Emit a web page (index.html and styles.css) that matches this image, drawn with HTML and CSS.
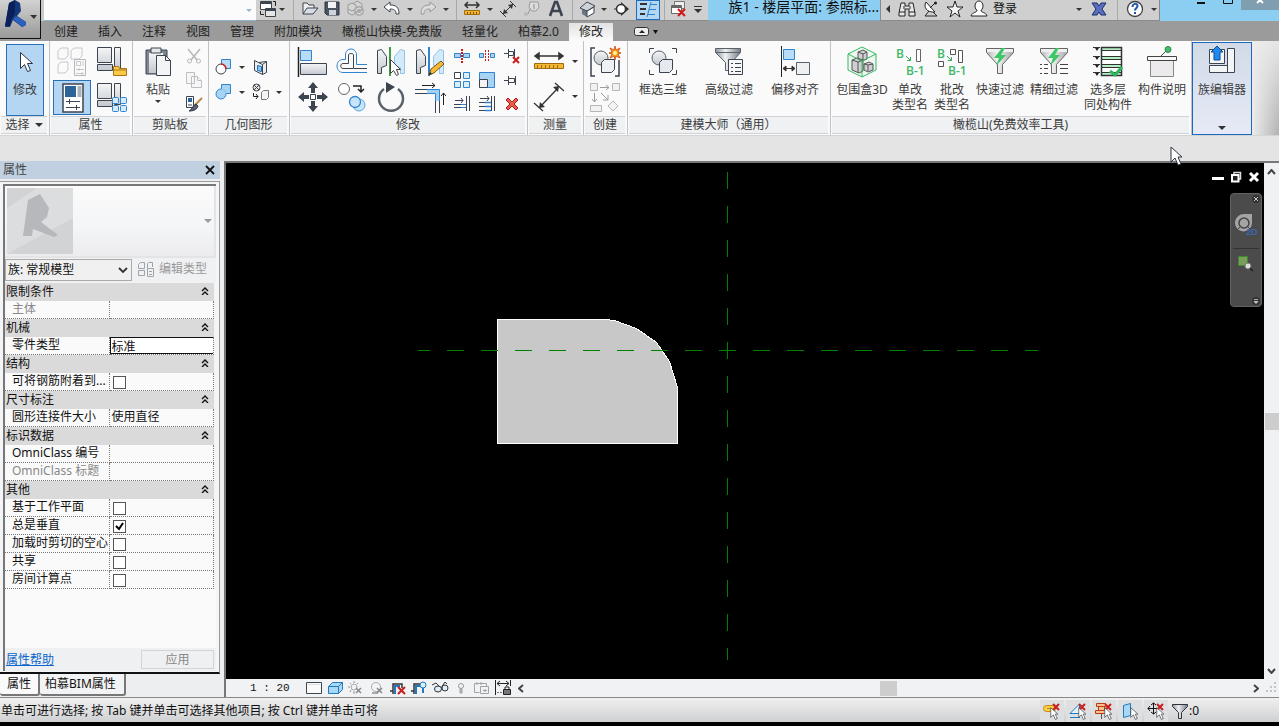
FILE: index.html
```
<!DOCTYPE html>
<html lang="zh-CN">
<head>
<meta charset="utf-8">
<title>族1 - 楼层平面</title>
<link rel="stylesheet" href="styles.css">
</head>
<body>
<svg class="defs" aria-hidden="true">
  <defs>
    <linearGradient id="steel" x1="0" y1="0" x2="0" y2="1"><stop offset="0" stop-color="#f4f5f6"/><stop offset="1" stop-color="#c4c9d0"/></linearGradient>
    <linearGradient id="metal" x1="0" y1="0" x2="1" y2="0"><stop offset="0" stop-color="#8b95a0"/><stop offset=".4" stop-color="#eef0f2"/><stop offset="1" stop-color="#737d88"/></linearGradient>
    <linearGradient id="silver" x1="0" y1="0" x2="1" y2="0"><stop offset="0" stop-color="#b4b4b8"/><stop offset=".4" stop-color="#f4f4f4"/><stop offset="1" stop-color="#a8a8ac"/></linearGradient>
    <symbol id="arrow" viewBox="0 0 12 20"><path d="M1 1v15l4-4 3 7 3-1-3-7h4z" fill="#fff" stroke="#2c3440" stroke-width="1"/></symbol>
    <symbol id="redx" viewBox="0 0 8 8"><path d="M1 1l6 6M7 1l-6 6" stroke="#c81e1e" stroke-width="2"/></symbol>
    <symbol id="collapse" viewBox="0 0 8 8"><path d="M1 4l3-3 3 3M1 8l3-3 3 3" fill="none" stroke="#111" stroke-width="1.4"/></symbol>
  </defs>
</svg>

<header class="top">
  <button class="app" aria-label="应用程序菜单">
    <svg width="40" height="38"><path d="M9 3l6-3 5 3 1 8-4 5 9 6v3l-4 2-9-7-3 7H5z" fill="#15357c"/><path d="M9 3l6-3v13l-4 7-1 6H5z" fill="#0b1f58"/><path d="M16 16l10 6v3l-4 2-9-8z" fill="#2d5fbd"/><path d="M30 15h7l-3 4z" fill="#333"/></svg>
  </button>
  <div class="topbar">
    <div class="recent"><i class="tri pale"></i></div>
    <div class="quick">
      <button class="q w22" aria-label="切换窗口"><svg width="20" height="20"><path d="M3.500 2.500h11v8h-11z" fill="#fff" stroke="#3c4450"/><path d="M3 4h12" stroke="#3c4450" stroke-width="2"/><path d="M8.500 9.500h10v8h-10z" fill="#e6e6e6" stroke="#3c4450"/><path d="M8 11h11" stroke="#3c4450" stroke-width="2"/><path d="M16 2.500h2.500V7M3.500 12v3.500H7" stroke="#222" fill="none"/></svg></button>
      <button class="q w8" aria-label="更多"><i class="tri"></i></button><i class="sep w14"></i>
      <button class="q w20" aria-label="打开"><svg width="18" height="18"><path d="M2 14V3h4l2 2h5v3" fill="#eee" stroke="#3c4450"/><path d="M2 14l4-6h11l-5 6z" fill="#d9dee4" stroke="#3c4450"/></svg></button>
      <button class="q w24" aria-label="保存"><svg width="18" height="18"><path d="M2 2h14v13H4l-2-2z" fill="#4a5564" stroke="#2c3440"/><path d="M5 2h8v6H5z" fill="#f3f3f3"/><path d="M6 10h7v5H6z" fill="#cfd4da"/></svg></button>
      <button class="q w24" aria-label="同步"><svg width="20" height="20"><path d="M2 6l4-2 4 2v4l-4 2-4-2zM7 5l4-3 5 3v6l-5 3M2 10v4l4 2 4-2" fill="#d4d4d4" stroke="#999"/><circle cx="13" cy="12" r="5" fill="#aaa"/><path d="M10 12a3 3 0 015-2M16 12a3 3 0 01-5 2" stroke="#eee" fill="none"/></svg></button>
      <button class="q w12" aria-label="更多"><i class="tri"></i></button>
      <button class="q w24" aria-label="放弃"><svg width="18" height="18"><path d="M1 7l6-5v3c6 0 9 2 9 9h-3c0-4-2-5-6-5v3z" fill="#fff" stroke="#3c4450"/></svg></button>
      <button class="q w12" aria-label="更多"><i class="tri"></i></button>
      <button class="q w24" aria-label="重做"><svg width="18" height="18"><path d="M17 7l-6-5v3c-6 0-9 2-9 9h3c0-4 2-5 6-5v3z" fill="#ddd" stroke="#999"/></svg></button>
      <button class="q w12" aria-label="更多"><i class="tri"></i></button><i class="sep w8"></i>
      <button class="q w24" aria-label="测量"><svg width="18" height="18"><path d="M2 5h13M5 2L2 5l3 3M13 2l3 3-3 3" stroke="#333" fill="none" stroke-width="1.500"/><path d="M1.500 10.500h15v4h-15z" fill="#f2b632" stroke="#a06c10"/><path d="M4.500 12v2M7.500 12v2M10.500 12v2M13.500 12v2" stroke="#805000"/></svg></button>
      <button class="q w12" aria-label="更多"><i class="tri"></i></button>
      <button class="q w24" aria-label="对齐标注"><svg width="18" height="18"><path d="M4 14L14 4M1 11l6 6M11 1l6 6" stroke="#333"/><path d="M4 14l1-5 4 4zM14 4l-1 5-4-4z" fill="#333"/></svg></button>
      <button class="q w24" aria-label="标记"><svg width="18" height="18"><path d="M1 14h4l3-7" stroke="#999" fill="none"/><path d="M7 2h8l1 5-3 4H9L6 7z" fill="#ddd" stroke="#999"/><path d="M11 4v5" stroke="#888"/><circle cx="3" cy="14" r="2" fill="#bbb"/></svg></button>
      <button class="q w24" aria-label="文字"><svg width="18" height="18"><path d="M3 16L8 2h2l5 14M5 11h8" fill="none" stroke="#3c4450" stroke-width="2.600"/></svg></button><i class="sep w8"></i>
      <button class="q w24" aria-label="三维视图"><svg width="18" height="18"><path d="M3 8l5 3v6l-5-3z" fill="#6c7682"/><path d="M8 11l7-4v6l-7 4z" fill="#fff" stroke="#3c4450"/><path d="M1 8l7-6 8 4-8 5z" fill="#cdd3da" stroke="#3c4450"/></svg></button>
      <button class="q w8" aria-label="更多"><i class="tri"></i></button>
      <button class="q w28" aria-label="剖面"><svg width="18" height="18"><path d="M8 2l8 7-8 7z" fill="#333"/><circle cx="8" cy="9" r="4.500" fill="#fff" stroke="#333" stroke-width="1.500"/><path d="M1 9h3" stroke="#333"/></svg></button>
      <button class="q w24 on" aria-label="细线"><svg width="20" height="20"><path d="M2 4h7M2 9h6M2 14h5" stroke="#333" stroke-width="2"/><path d="M13 2L9 17M12 4.500h7M11 9.500h7M10 14.500h7" stroke="#2f83cf" fill="none"/></svg></button><i class="sep w8"></i>
      <button class="q w20" aria-label="关闭隐藏窗口"><svg width="20" height="20"><path d="M6.500 2.500h10v7h-10z" fill="#eee" stroke="#777"/><path d="M3.500 6.500h10v8h-10z" fill="#fff" stroke="#666"/><path d="M3 8h11" stroke="#666" stroke-width="2"/><path d="M10 10l7 7M17 10l-7 7" stroke="#d01818" stroke-width="2"/></svg></button>
      <button class="q w20 more" aria-label="自定义"><i class="bar"></i><i class="tri wide"></i></button>
    </div>
    <h1 class="doc-title">族1 - 楼层平面: 参照标...</h1>
    <div class="info">
      <button class="q w14" aria-label="折叠"><svg width="6" height="10"><path d="M5 1v8L1 5z" fill="#333"/></svg></button>
      <button class="q w24" aria-label="搜索"><svg width="18" height="18"><path d="M3 3h4v3h4V3h4l2 10v3h-6V9H7v7H1v-3z" fill="#e8e8e8" stroke="#222"/><path d="M1 12h6M11 12h6M6 6v3M12 6v3" stroke="#222"/></svg></button>
      <button class="q w24" aria-label="通讯中心"><svg width="18" height="18"><path d="M4 2c-3 5 1 11 9 10z" fill="#fff" stroke="#222"/><path d="M8 8l5-5M7 11l-4 5h12l-4-4" fill="none" stroke="#222"/><circle cx="13.500" cy="3" r="1.500" fill="#222"/></svg></button>
      <button class="q w24" aria-label="收藏夹"><svg width="18" height="18"><path d="M9 1l2 6h6l-5 4 2 6-5-4-5 4 2-6-5-4h6z" fill="#f4f4f4" stroke="#222"/></svg></button>
      <button class="q signin"><svg width="18" height="18"><ellipse cx="9" cy="6" rx="4" ry="5" fill="#fff" stroke="#222"/><path d="M7 10c0 3-5 2-6 6h16c-1-4-6-3-6-6" fill="#fff" stroke="#222"/></svg><span>登录</span></button>
      <button class="q w12" aria-label="更多"><i class="tri"></i></button>
      <button class="q w28" aria-label="Exchange"><svg width="18" height="18"><path d="M2 3h5l2 3 2-3h5l-2 3-2 3 2 3 2 3h-5l-2-3-2 3H2l2-3 2-3-2-3z" fill="#5a70bc" stroke="#1c2c70"/></svg></button><i class="sep w8"></i>
      <button class="q w28" aria-label="帮助"><svg width="18" height="18"><circle cx="9" cy="9" r="7.500" fill="#fff" stroke="#444" stroke-width="1.300"/><path d="M6.500 7c0-4 5-4 5-1 0 2-2.500 2-2.500 4.500M9 12v2" fill="none" stroke="#1e56b0" stroke-width="2"/></svg></button>
      <button class="q w10" aria-label="更多"><i class="tri"></i></button>
    </div>
    <div class="win">
      <button aria-label="最小化"><svg width="20" height="12"><path d="M6 3h8" stroke="#111" stroke-width="2"/></svg></button>
      <button aria-label="最大化"><svg width="20" height="12"><path d="M5.500 -3.500h9v7h-9z" fill="none" stroke="#111"/></svg></button>
      <button class="close" aria-label="关闭"><svg width="20" height="12"><path d="M7 -3l6 6M13 -3l-6 6" stroke="#fff" stroke-width="2"/></svg></button>
    </div>
  </div>
  <nav class="tabs">
    <button>创建</button><button>插入</button><button>注释</button><button>视图</button><button>管理</button><button>附加模块</button><button>橄榄山快模-免费版</button><button>轻量化</button><button>柏慕2.0</button><button class="active">修改</button>
    <button class="fold" aria-label="最小化功能区"><svg width="26" height="10"><rect x="1.500" y=".5" width="14" height="8" rx="2" fill="#eee" stroke="#333"/><path d="M6 6l3-3 3 3z" fill="#222"/><path d="M20 3h5l-2.500 4z" fill="#111"/></svg></button>
  </nav>
</header>

<section class="ribbon">
  <div class="panel p-select">
    <div class="body"><button class="big selected"><svg width="32" height="32"><path d="M11.500 6.500v16l4-4 3 7 3-1-3-7h5z" fill="#fff" stroke="#2c3440"/></svg><span>修改</span></button></div>
    <button class="cap">选择 <i class="tri"></i></button>
  </div>
  <div class="panel p-props">
    <div class="body grid2">
      <button aria-label="类型属性"><svg width="32" height="32" fill="#fafafa" stroke="#c4c7ca"><path d="M2 5l3-3h7v8l-3 3H2zM15 5l3-3h8v8l-3 3h-8zM2 19l3-3h7v8l-3 3H2z"/><path d="M18.500 13.500h11v16h-11z" stroke="#b4b8bc"/><path d="M20.500 15.500h4v4h-4zM27 15v5M20 23.500h8M20 27.500h8M23 22v3M26 26v3"/></svg></button>
      <button aria-label="族类别和族参数"><svg width="32" height="32"><path d="M1.500 1.500h14v15h-14zM18.500 1.500h6v21h-6zM1.500 18.500h15v6h-15z" fill="url(#steel)" stroke="#3c4450"/><path d="M17.500 29.500v-9h5l1 2h7v7z" fill="#fbc944" stroke="#a8741a"/><path d="M18 24h12" stroke="#a8741a"/></svg></button>
      <button class="selected" aria-label="属性"><svg width="32" height="32"><path d="M7 2h20v28H7z" fill="#fff" stroke="#3c4450" stroke-width="1.500"/><path d="M9 4h11v11H9z" fill="#2d6396"/><path d="M21.500 4h4v11h-4z" fill="#aab2ba"/><path d="M10 19.500h14M10 25.500h14M13.500 17v5M20.500 23v5" stroke="#3c4450"/></svg></button>
      <button aria-label="族类型"><svg width="32" height="32"><path d="M1.500 1.500h14v15h-14zM18.500 1.500h6v21h-6zM1.500 18.500h15v6h-15z" fill="url(#steel)" stroke="#3c4450"/><g fill="#d4ebfb" stroke="#2f83cf"><rect x="16.500" y="15.500" width="6" height="6" rx="1"/><rect x="24.500" y="15.500" width="6" height="6" rx="1"/><rect x="16.500" y="23.500" width="6" height="6" rx="1"/><rect x="24.500" y="23.500" width="6" height="6" rx="1"/></g></svg></button>
    </div>
    <div class="cap">属性</div>
  </div>
  <div class="panel p-clip">
    <div class="body">
      <button class="big paste"><svg width="32" height="32"><path d="M4 4h21v24H4z" fill="#7c8793" stroke="#3c4450"/><path d="M7 7h14v20H7z" fill="url(#steel)"/><path d="M9 2h10v5H9z" fill="#e4e6e8" stroke="#3c4450"/><path d="M14.500 9.500h9l5 5v15h-14z" fill="#f2f4f6" stroke="#3c4450"/><path d="M23.500 9.500v5h5" fill="none" stroke="#3c4450"/></svg><span>粘贴</span><i class="tri"></i></button>
      <div class="stack">
        <button aria-label="剪切"><svg width="18" height="18" stroke="#b4b8bc" fill="none"><path d="M3 2l9 11M15 2L6 13" stroke-width="1.500"/><circle cx="4.500" cy="14" r="2"/><circle cx="13.500" cy="14" r="2"/></svg></button>
        <button aria-label="复制"><svg width="18" height="18" stroke="#bbbfc4" fill="#f6f6f6"><path d="M1.500 1.500h8v11h-8zM6.500 5.500h6l4 4v7h-10z"/><path d="M12.500 5.500v4h4"/></svg></button>
        <button aria-label="匹配类型"><svg width="18" height="18"><path d="M1.500 1.500h7v11h-7z" fill="#fff" stroke="#3c4450"/><path d="M3 3h4v4H3z" fill="#2d6396"/><path d="M3 10h4" stroke="#3c4450"/><path d="M17 3l-7 7" stroke="#b88a50" stroke-width="2"/><path d="M11 9l2 2c-1 4-5 5-9 5 3-1 3-5 7-7z" fill="#59636f" stroke="#2c3440"/></svg></button>
      </div>
    </div>
    <div class="cap">剪贴板</div>
  </div>
  <div class="panel p-geo">
    <div class="body geo">
      <button aria-label="剪切几何图形"><svg width="18" height="18"><path d="M6.500 1.500h9v9h-9z" fill="#b8dcf6" stroke="#2f83cf"/><circle cx="6" cy="11" r="5" fill="#fff" stroke="#3c4450"/><path d="M6 6a5 5 0 015 5" fill="none" stroke="#e01818" stroke-width="1.500"/></svg></button><button class="dd" aria-label="更多"><i class="tri"></i></button>
      <button aria-label="拆分面"><svg width="18" height="18"><path d="M2.500 2.500l4 2 8-1v11l-4 2-8-4z" fill="#eceef0" stroke="#3c4450"/><path d="M6.500 4.500l4 2v10" fill="none" stroke="#3c4450"/><path d="M10.500 6.500l4-3" stroke="#3c4450"/><path d="M5.500 7.500l4 1v5l-4-1z" fill="#8cc4ee" stroke="#1f6cb8"/></svg></button><i></i>
      <button aria-label="连接几何图形"><svg width="18" height="18"><path d="M6.500 6V1.500h9v9h-4.500a5 5 0 11-4.500-4.500z" fill="#a8d4f4" stroke="#2f83cf"/><path d="M6.500 6a5 5 0 014.500 4.500" fill="none" stroke="#8cc0e8"/></svg></button><button class="dd" aria-label="更多"><i class="tri"></i></button>
      <button aria-label="取消连接"><svg width="18" height="18"><circle cx="4.500" cy="4.500" r="3.500" fill="#e8e8e8" stroke="#3c4450"/><path d="M2 2l5 5M7 2L2 7" stroke="#3c4450"/><path d="M1.500 10v3.500H6M4 11l2 2.500L4 16" fill="none" stroke="#222"/><path d="M9.500 9.500l2-2h5v7l-2 2h-5z" fill="#f4f4f4" stroke="#777"/></svg></button><button class="dd" aria-label="更多"><i class="tri"></i></button>
    </div>
    <div class="cap">几何图形</div>
  </div>
  <div class="panel p-modify">
    <div class="body">
      <div class="mod-large">
        <button aria-label="对齐"><svg width="32" height="32"><path d="M1.500 1v30" stroke="#222" stroke-width="1.500"/><path d="M3.500 4.500h11v10h-11z" fill="#b8dcf6" stroke="#2f83cf"/><path d="M3.500 17.500h26v11h-26z" fill="url(#steel)" stroke="#3c4450"/></svg></button>
        <button aria-label="偏移"><svg width="32" height="32" fill="none"><path d="M31 18.500H20.500V9c0-8-11-8-11 0v4.500H7C-1 13.500-1 26.500 7 26.500h24" stroke="#2f83cf"/><path d="M31 22.500H17.500V9c0-2-5-2-5 0v8.500H7c-3 0-3 5 0 5h10" stroke="#3c4450"/></svg></button>
        <button aria-label="镜像-拾取轴"><svg width="32" height="32"><path d="M2.500 4.500l4-1 5 7v9l-5 2v6h-4z" fill="url(#steel)" stroke="#3c4450"/><path d="M29.500 4.500l-4-1-6 7v9l6 2v6h4z" fill="#d3eafa" stroke="#93c4e4"/><path d="M15 1v29" stroke="#3da23d" stroke-width="2"/><path d="M15.500 13.500v14l3-3 3 5 2-1-2-5h4z" fill="#fff" stroke="#444"/></svg></button>
        <button aria-label="镜像-绘制轴"><svg width="32" height="32"><path d="M2.500 4.500l4-1 5 7v9l-5 2v6h-4z" fill="url(#steel)" stroke="#3c4450"/><path d="M29.500 4.500l-4-1-6 7v9l6 2v6h4z" fill="#d3eafa" stroke="#93c4e4"/><path d="M15 1v29" stroke="#2f83cf" stroke-width="2"/><path d="M15 29l2-6 10-8 3 3-10 9z" fill="#f5ba35" stroke="#7a5520"/><path d="M15 29l1-3 2 2z" fill="#222"/></svg></button>
        <button aria-label="移动"><svg width="32" height="32" fill="#3c4450"><path d="M16 1l5 6h-3v5h-4V7h-3zM16 31l5-6h-3v-5h-4v5h-3zM1 16l6-5v3h5v4H7v3zM31 16l-6-5v3h-5v4h5v3z"/><path d="M13.500 13.500h5v5h-5z" fill="#fff" stroke="#3c4450"/></svg></button>
        <button aria-label="复制图元"><svg width="32" height="32"><circle cx="8" cy="8" r="5.500" fill="#fff" stroke="#666"/><path d="M17 5h8v6M22 8l3 3 3-3" fill="none" stroke="#222" stroke-width="1.500"/><circle cx="23" cy="24" r="6" fill="#c6e4fa" stroke="#5aa4dc"/><circle cx="19" cy="21" r="5.500" fill="#c6e4fa" stroke="#2f83cf" stroke-width="1.300"/></svg></button>
        <button aria-label="旋转"><svg width="32" height="32"><path d="M9 8a12 12 0 1014 0" fill="none" stroke="#59616b" stroke-width="2.500"/><path d="M11 1l9 5-9 6z" fill="#3c4450"/></svg></button>
        <button aria-label="修剪/延伸为角"><svg width="32" height="32" fill="none"><path d="M1 8.500h12M1 12.500h12M21.500 20v12M25.500 20v12" stroke="#3c4450"/><path d="M13 10.500h10.500V20" stroke="#a4d2f6" stroke-width="4"/><path d="M13 8.500h12.500V20M13 12.500h8.500V20" stroke="#2f83cf"/><path d="M8 4.500h13M18 2l3 2.500L18 7M29.500 24V12M27 15l2.500-3 2.500 3" stroke="#222"/></svg></button>
      </div>
      <div class="mod-small">
        <button aria-label="拆分图元"><svg width="18" height="18"><path d="M1.500 6.500h6v4h-6zM10.500 6.500h6v4h-6z" fill="#a8d4f4" stroke="#2f83cf"/><path d="M9 2v14" stroke="#d01818" stroke-width="2" stroke-dasharray="2 1"/></svg></button>
        <button aria-label="用间隙拆分"><svg width="18" height="18"><path d="M1.500 6.500h4v4h-4zM12.500 6.500h4v4h-4z" fill="#a8d4f4" stroke="#2f83cf"/><path d="M7.500 3v12M10.500 3v12" stroke="#d01818" stroke-dasharray="2 1"/></svg></button>
        <button aria-label="解锁"><svg width="18" height="18"><path d="M1 6.500h4M5.500 2v9M5.500 4.500h5v4h-5M11.500 2v9" fill="none" stroke="#3c4450"/><path d="M10 10l6 6M16 10l-6 6" stroke="#c81e1e" stroke-width="2"/></svg></button>
        <button aria-label="阵列"><svg width="18" height="18" fill="#d9edfb" stroke="#2f83cf"><path d="M1.500 1.500h6v6h-6z" fill="#fff" stroke="#3c4450"/><path d="M10.500 1.500h6v6h-6zM1.500 10.500h6v6h-6zM10.500 10.500h6v6h-6z"/></svg></button>
        <button aria-label="缩放"><svg width="18" height="18"><path d="M1.500 1.500h15v15h-15z" fill="#a8d4f4" stroke="#2f83cf"/><path d="M1.500 8.500h8v8h-8z" fill="#f4f4f4" stroke="#3c4450"/></svg></button>
        <button aria-label="锁定"><svg width="18" height="18"><path d="M1 9.500h4M5.500 5v9M5.500 7.500h6v4h-6M12.500 5v9" fill="none" stroke="#3c4450"/></svg></button>
        <button aria-label="修剪单个"><svg width="18" height="18"><path d="M13.500 1v15M16.500 1v15M1 9.500h7M1 12.500h7M2 5.500h8M8 3l2 2.500L8 8" fill="none" stroke="#3c4450"/><path d="M8 9.500h5M8 12.500h5" stroke="#2f83cf"/></svg></button>
        <button aria-label="修剪多个"><svg width="18" height="18"><path d="M13.500 1v15M16.500 1v15M1 7.500h6M1 11.500h6M1 15.500h6M2 3.500h9M9 1l2 2.500L9 6" fill="none" stroke="#3c4450"/><path d="M7 7.500h6M7 11.500h6M7 15.500h6" stroke="#2f83cf" stroke-width="1.500"/></svg></button>
        <button aria-label="删除"><svg width="18" height="18"><path d="M5 3l4 4 4-4 2 2-4 4 4 4-2 2-4-4-4 4-2-2 4-4-4-4z" fill="#ec5a4a" stroke="#b01818"/></svg></button>
      </div>
    </div>
    <div class="cap">修改</div>
  </div>
  <div class="panel p-measure">
    <div class="body measure">
      <button aria-label="测量两点"><svg width="32" height="32"><path d="M2 10h28M6 7l-4 3 4 3zM26 7l4 3-4 3z" fill="#333" stroke="#333" stroke-width="1.500"/><path d="M1.500 17.500h29v5h-29z" fill="#f2b632" stroke="#a06c10"/><path d="M4.500 19v3M8.500 19v3M12.500 19v3M16.500 19v3M20.500 19v3M24.500 19v3" stroke="#a06c10"/></svg></button><button class="dd" aria-label="更多"><i class="tri"></i></button>
      <button aria-label="对齐尺寸标注"><svg width="32" height="32"><path d="M7 26L25 7M1 22l9 8M22 2l9 8" stroke="#333" stroke-width="1.300"/><path d="M6 27l1-6 5 5zM26 5l-1 6-5-5z" fill="#333"/></svg></button><button class="dd" aria-label="更多"><i class="tri"></i></button>
    </div>
    <div class="cap">测量</div>
  </div>
  <div class="panel p-create">
    <div class="body create">
      <button aria-label="创建组"><svg width="32" height="32"><path d="M6 2H2v28h4M26 30h4V14" fill="none" stroke="#3c4450" stroke-width="1.500"/><circle cx="12" cy="12" r="7" fill="url(#steel)" stroke="#59616b"/><path d="M12.500 16.500l3-3h10v10l-3 3h-10z" fill="#eef1f4" stroke="#3c4450"/><path d="M26 0l1 4 4-2-2 4 3 1-3 1 2 4-4-2-1 4-1-4-4 2 2-4-3-1 3-1-2-4 4 2z" fill="#f5a01a" stroke="#c8440c" stroke-width=".8"/><circle cx="26" cy="7" r="2" fill="#fff3a0"/></svg></button>
      <button aria-label="创建类似"><svg width="32" height="32" fill="#f2f2f2" stroke="#b4b8bc"><path d="M1.500 2.500h7v7h-7zM23.500 2.500h7v7h-7zM1.500 24.500h11v6h-11zM24 20l5 5-5 5-5-5z"/><path d="M11 6.500h9M17 4l3 2.500L17 9M5.500 12v9M3 18l2.500 3L8 18M12 12l7 7M19 14v5h-5" fill="none" stroke="#9a9ea2"/></svg></button>
    </div>
    <div class="cap">创建</div>
  </div>
  <div class="panel p-master">
    <div class="body">
      <button class="big w66"><svg width="32" height="32"><path d="M2.500 7V2.500H7M25 2.500h4.500V7M29.500 24v4.500H25M7 28.500H2.500V24" fill="none" stroke="#3c4450"/><circle cx="12" cy="12" r="7" fill="url(#steel)" stroke="#59616b"/><path d="M12.500 16.500l3-3h10v10l-3 3h-10z" fill="#e6eaee" stroke="#3c4450"/></svg><span>框选三维</span></button>
      <button class="big w66"><svg width="32" height="32"><path d="M2.500 2.500h25v4l-9 10v8h-6v-8l-10-10z" fill="url(#metal)" stroke="#59616b"/><path d="M3 6.500h24" stroke="#59616b"/><path d="M15.500 13.500h14v15h-14z" fill="#f6f7f8" stroke="#3c4450"/><path d="M18 17.500h2M22 17.500h6M18 21.500h2M22 21.500h6M18 25.500h2M22 25.500h6" stroke="#3c4450"/></svg><span>高级过滤</span></button>
      <button class="big w66"><svg width="32" height="32"><path d="M2.500 0v31" stroke="#222"/><path d="M4.500 3.500h11v10h-11z" fill="#b8dcf6" stroke="#2f83cf"/><path d="M17.500 16.500h13v12h-13z" fill="#eef0f2" stroke="#59616b"/><path d="M4 22.500h12M7 20l-3 2.500L7 25zM13 20l3 2.500-3 2.500z" fill="#333" stroke="#333"/></svg><span>偏移对齐</span></button>
    </div>
    <div class="cap">建模大师（通用）</div>
  </div>
  <div class="panel p-olive">
    <div class="body olive">
      <button class="big w54"><svg width="32" height="32"><path d="M16 1l14 7v16l-14 7L2 24V8z" fill="#eef8f0" stroke="#35b864"/><path d="M6 14l5-2 6 2v11l-4 2-7-3zM12 6l5-2 4 2v7l-5 2-4-2zM18 18l5-2 4 2v6l-5 2-4-2z" fill="#d0d0d4" stroke="#555"/><path d="M6 14l6 2 5-2M12 16v11M12 6l5 2 4-2M17 8v7M18 18l4 1 5-1M22 19v6" fill="none" stroke="#555"/><path d="M2 8l14 7 14-7M16 15v16" fill="none" stroke="#35b864"/></svg><span>包围盒3D</span></button>
      <button class="big w42"><svg class="bicon" width="32" height="32"><text x="2" y="12">B</text><text x="12" y="29">B-1</text><path d="M12 10l4 4M16.500 11v3.500H13" fill="none" stroke="#35a860"/><path d="M22.500 3.500h4v12h-4z" fill="#fff" stroke="#666"/></svg><span>单改<br>类型名</span></button>
      <button class="big w42"><svg class="bicon" width="32" height="32"><text x="1" y="12">B</text><text x="12" y="29">B-1</text><path d="M11 10l4 4M15.500 11v3.500H12" fill="none" stroke="#35a860"/><path d="M14.500 3.500h5v5h-5zM22.500 4.500h4v12h-4zM2.500 15.500h5v5h-5z" fill="#fff" stroke="#555"/></svg><span>批改<br>类型名</span></button>
      <button class="big w54"><svg width="32" height="32"><path d="M2.500 2.500h27v4l-11 12v9h-5v-9l-11-12z" fill="url(#silver)" stroke="#666"/><path d="M3 3h26v3H3z" fill="#f0f0f0"/><path d="M18 2l-8 10h5l-3 8 10-11h-5l4-7z" fill="#3cc867"/></svg><span>快速过滤</span></button>
      <button class="big w54"><svg width="32" height="32"><path d="M2.500 2.500h27v4l-11 12v9h-5v-9l-11-12z" fill="url(#silver)" stroke="#666"/><path d="M3 3h26v3H3z" fill="#f0f0f0"/><path d="M18 2l-8 10h5l-3 8 10-11h-5l4-7z" fill="#3cc867"/><path d="M2 18.500h2M6 18.500h4M2 22.500h2M6 22.500h4M2 27.500h2M6 27.500h4M22 18.500h8M22 22.500h8M22 27.500h8" stroke="#444"/></svg><span>精细过滤</span></button>
      <button class="big w54"><svg width="32" height="32"><path d="M9.500 1.500h20v28h-20z" fill="#fff"/><path d="M10 3h19M10 12h19M10 20h19M10 28h19" stroke="#b5f0c4" stroke-width="3"/><path d="M10 4.500h19M10 10.500h19M10 13.500h19M10 18.500h19M10 21.500h19M10 26.500h19M1 1.500h7M1 10.500h7M1 18.500h7M1 26.500h7" stroke="#333"/><path d="M9.500 1.500h20v28h-20z" fill="none" stroke="#333" stroke-width="1.500"/><path d="M3 2h4l-2 3zM3 11h4l-2 3zM3 19h4l-2 3zM3 27h4l-2 3z" fill="#222"/><path d="M18 25l5 4 7-8" fill="none" stroke="#2fb55c" stroke-width="3"/></svg><span>选多层<br>同处构件</span></button>
      <button class="big w54"><svg width="32" height="32"><path d="M4.500 13.500h23v17h-23z" fill="#eceaec" stroke="#888"/><path d="M1.500 10.500h29v4h-29z" fill="#f8f8f8" stroke="#444"/><path d="M15 10l6-6" stroke="#444"/><circle cx="22" cy="3.500" r="3" fill="#43bd6c" stroke="#2c8a4c"/></svg><span>构件说明</span></button>
    </div>
    <div class="cap">橄榄山(免费效率工具)</div>
  </div>
  <div class="panel-edit"><button class="big"><svg width="32" height="32"><path d="M3.500 3.500h15v14h-15zM21.500 2.500h7v24h-7zM3.500 19.500h18v7h-18z" fill="#f4f5f7" stroke="#3c4450"/><path d="M11 0l6 6h-3v8H8V6H5z" fill="#1f8af0" stroke="#0d4a94"/></svg><span>族编辑器</span></button><i class="tri"></i></div>
  <div class="ribbon-rest"></div>
</section>

<div class="options"><svg class="pointer" width="14" height="22"><use href="#arrow" width="12" height="20"/></svg></div>

<main class="work">
  <aside class="side">
    <div class="side-head"><h2>属性</h2><button aria-label="关闭属性"><svg width="10" height="10"><path d="M1 1l8 8M9 1l-8 8" stroke="#111" stroke-width="1.800"/></svg></button></div>
    <div class="side-frame">
      <div class="side-in">
        <button class="type" aria-label="类型选择器"><svg width="66" height="66"><rect width="66" height="66" fill="#d2d3d5"/><path d="M0 66V20L30 0h36v30z" fill="#dcdddf"/><path d="M21 12l12-6 9 14-2 9-6 5 17 13-4 2-21-8-1 7h-9z" fill="#b6b8bb"/></svg><i class="tri grey"></i></button>
        <div class="family"><select aria-label="族"><option>族: 常规模型</option></select>
          <button class="edit" disabled><svg width="16" height="16" fill="none" stroke="#a0a4a8"><path d="M.5 3.500l2-2h4v6h-6zM9.500 7V2.500l1-1h4V6M.5 9.500h6v5h-6zM9.500 7.500h6v8h-6zM11 10.500h3M11 13.500h3"/></svg>编辑类型</button></div>
        <table class="props">
          <tbody>
          <tr class="grp"><th colspan="2"><button>限制条件<svg width="8" height="9"><use href="#collapse" width="8" height="8"/></svg></button></th></tr>
          <tr class="off"><td>主体</td><td></td></tr>
          <tr class="grp"><th colspan="2"><button>机械<svg width="8" height="9"><use href="#collapse" width="8" height="8"/></svg></button></th></tr>
          <tr><td><label for="part">零件类型</label></td><td class="field"><input id="part" type="text" value="标准"></td></tr>
          <tr class="grp"><th colspan="2"><button>结构<svg width="8" height="9"><use href="#collapse" width="8" height="8"/></svg></button></th></tr>
          <tr><td><label for="rebar">可将钢筋附着到...</label></td><td><input id="rebar" type="checkbox"></td></tr>
          <tr class="grp"><th colspan="2"><button>尺寸标注<svg width="8" height="9"><use href="#collapse" width="8" height="8"/></svg></button></th></tr>
          <tr><td>圆形连接件大小</td><td>使用直径</td></tr>
          <tr class="grp"><th colspan="2"><button>标识数据<svg width="8" height="9"><use href="#collapse" width="8" height="8"/></svg></button></th></tr>
          <tr><td>OmniClass 编号</td><td></td></tr>
          <tr class="off"><td>OmniClass 标题</td><td></td></tr>
          <tr class="grp"><th colspan="2"><button>其他<svg width="8" height="9"><use href="#collapse" width="8" height="8"/></svg></button></th></tr>
          <tr><td><label for="c1">基于工作平面</label></td><td><input id="c1" type="checkbox"></td></tr>
          <tr><td><label for="c2">总是垂直</label></td><td><input id="c2" type="checkbox" checked></td></tr>
          <tr><td><label for="c3">加载时剪切的空心</label></td><td><input id="c3" type="checkbox"></td></tr>
          <tr><td><label for="c4">共享</label></td><td><input id="c4" type="checkbox"></td></tr>
          <tr><td><label for="c5">房间计算点</label></td><td><input id="c5" type="checkbox"></td></tr>
          </tbody>
        </table>
        <div class="side-foot"><a href="#help">属性帮助</a><button disabled>应用</button></div>
      </div>
    </div>
    <div class="side-tabs"><button class="active">属性</button><button>柏慕BIM属性</button></div>
  </aside>

  <section class="view">
    <div class="view-row">
      <div class="canvas">
        <svg class="drawing" shape-rendering="crispEdges" role="img" aria-label="楼层平面">
          <path d="M271.500 156.500h108l9 1 22 8 20 14 13 19 8 26v56h-180z" fill="#c8c8c8" stroke="#fff"/>
          <path d="M192 187.500h620" stroke="#008000" stroke-dasharray="17 17" stroke-dashoffset="5"/>
          <path d="M501.500 9v488" stroke="#008000" stroke-dasharray="17 17"/>
        </svg>
        <div class="mdi">
          <button aria-label="最小化视图"><svg width="12" height="12"><path d="M0 7.500h12" stroke="#fff" stroke-width="3"/></svg></button>
          <button aria-label="还原视图"><svg width="12" height="12"><path d="M4 3V1.500h6.500V8H9" fill="none" stroke="#ddd" stroke-width="1.500"/><path d="M2 4h6.500v6.500H2z" fill="#222" stroke="#fff" stroke-width="2"/></svg></button>
          <button aria-label="关闭视图"><svg width="12" height="12"><path d="M2 2l8 8M10 2l-8 8" stroke="#fff" stroke-width="3"/></svg></button>
        </div>
        <div class="navbar">
          <button class="tiny" aria-label="关闭导航栏"><svg width="10" height="10"><circle cx="5" cy="5" r="4" fill="#333"/><path d="M3 3l4 4M7 3L3 7" stroke="#ccc"/></svg></button>
          <button aria-label="二维控制盘"><svg width="26" height="24"><path d="M2 10a9 9 0 019-8h8v9a8 8 0 01-17 0z" fill="#a4a4a4"/><circle cx="11" cy="11" r="5" fill="none" stroke="#444" stroke-width="1.500"/><path d="M7 15l-3 3M15 15l2 2" stroke="#444"/><text x="13" y="23">2D</text></svg></button>
          <hr>
          <button aria-label="区域放大"><svg width="26" height="24"><path d="M5.500 5.500h9v9h-9z" fill="#7a9c5c" stroke="#3d8a2a"/><circle cx="15" cy="15" r="3" fill="#ddd" stroke="#777"/><path d="M17 17l3 3" stroke="#222" stroke-width="1.500"/></svg></button>
          <button class="tiny" aria-label="自定义导航栏"><svg width="10" height="10"><circle cx="5" cy="5" r="4" fill="#333"/><path d="M3 3.500h4M3 5.500h4l-2 2z" stroke="#ccc" fill="#ccc" stroke-width=".8"/></svg></button>
        </div>
      </div>
      <div class="vscroll"><svg width="9" height="6"><path d="M1 5l3.500-4L8 5" fill="none" stroke="#444" stroke-width="2"/></svg><i class="thumb"></i><svg width="9" height="6"><path d="M1 1l3.500 4L8 1" fill="none" stroke="#444" stroke-width="2"/></svg></div>
    </div>
    <div class="controls">
      <button class="scale">1 : 20</button>
      <button class="vc" aria-label="详细程度"><svg width="18" height="16"><path d="M1.500 2.500h15v11h-15z" fill="#fafafa" stroke="#3c4450"/><path d="M3 4.500h12" stroke="#ddd"/></svg></button>
      <button class="vc" aria-label="视觉样式"><svg width="18" height="16"><path d="M2.500 6.500l4-4h10v7l-4 4h-10z" fill="#a8d8f8" stroke="#2478bc"/><path d="M2.500 6.500h10v7M12.500 6.500l4-4" fill="none" stroke="#2478bc"/></svg></button>
      <button class="vc" aria-label="日光路径"><svg width="18" height="16"><circle cx="7" cy="7" r="3" fill="none" stroke="#aaa"/><path d="M7 1v2M7 11v3M1 7h2M3 3l1 1M11 3l-1 1M3 12l1-2" stroke="#999"/><path d="M9 8l5 5M14 8l-5 5" stroke="#888" stroke-width="1.500"/></svg></button>
      <button class="vc" aria-label="阴影"><svg width="18" height="16"><circle cx="8" cy="7" r="4.500" fill="#f4f4f4" stroke="#aaa"/><path d="M4 13h6" stroke="#aaa" stroke-width="2"/><path d="M9 8l5 5M14 8l-5 5" stroke="#888" stroke-width="1.500"/></svg></button>
      <button class="vc" aria-label="裁剪视图"><svg width="18" height="16"><path d="M1 11h3M4 14V4h9v4" fill="none" stroke="#333" stroke-width="1.500"/><path d="M6 14V6h5" fill="none" stroke="#2478bc" stroke-width="2"/><path d="M9 7l7 7M16 7l-7 7" stroke="#c81e1e" stroke-width="2"/></svg></button>
      <button class="vc" aria-label="显示裁剪区域"><svg width="18" height="16"><path d="M1 11h3M4 14V4h6" fill="none" stroke="#333" stroke-width="1.500"/><path d="M6 14V6h4" fill="none" stroke="#2478bc" stroke-width="2"/><circle cx="13" cy="5" r="3" fill="#d8effd" stroke="#2478bc"/><path d="M13 8v5" stroke="#2478bc" stroke-width="2"/></svg></button>
      <button class="vc" aria-label="临时隐藏"><svg width="18" height="16"><path d="M1 5l4-2 5 5 4-6 2 2" fill="none" stroke="#333"/><ellipse cx="7" cy="9" rx="3.500" ry="3" fill="#dceefa" stroke="#333"/><ellipse cx="14" cy="8" rx="3" ry="3" fill="#dceefa" stroke="#333"/></svg></button>
      <button class="vc" aria-label="显示隐藏图元"><svg width="18" height="16"><circle cx="9" cy="6" r="2.500" fill="#f4f4f4" stroke="#999"/><path d="M8 9h2v4H8z" fill="#ccc" stroke="#999"/></svg></button>
      <button class="vc" aria-label="临时视图属性"><svg width="18" height="16" fill="none" stroke="#a4a4a4"><path d="M1.500 3.500h12V6M1.500 3.500v9h5M7.500 6.500h8v7h-8zM10 10.500h4M12 9v3M4 2v3M8 2v3"/></svg></button>
      <button class="vc" aria-label="显示约束"><svg width="18" height="16"><path d="M1.500 0v15M16.500 0v6M3 3.500h12M6 1L3 3.500 6 6M12 1l3 2.500L12 6" fill="none" stroke="#222"/><path d="M3 12.500h6" stroke="#777" stroke-dasharray="2 1"/><path d="M9.500 9.500h7v5h-7z" fill="#777" stroke="#222"/><path d="M11 9V7h4v2" fill="none" stroke="#222"/></svg></button>
      <div class="hscroll"><svg width="6" height="9"><path d="M5 1L1 4.500 5 8" fill="none" stroke="#444" stroke-width="2"/></svg><i class="thumb"></i><svg width="6" height="9"><path d="M1 1l4 3.500L1 8" fill="none" stroke="#444" stroke-width="2"/></svg></div>
      <svg width="12" height="12" fill="#c4c4c4"><path d="M8 0h2v2H8zM4 4h2v2H4zM8 4h2v2H8zM0 8h2v2H0zM4 8h2v2H4zM8 8h2v2H8z"/></svg>
    </div>
  </section>
</main>

<footer class="status">
  <p>单击可进行选择; 按 Tab 键并单击可选择其他项目; 按 Ctrl 键并单击可将</p>
  <div class="sel">
    <button aria-label="选择链接"><svg width="20" height="20"><rect x="1.500" y="4.500" width="12" height="6" rx="3" fill="#fbd04a" stroke="#c8860a"/><path d="M5 7.500h5" stroke="#c8860a"/><use href="#redx" x="10" y="2" width="8" height="8"/><use href="#arrow" x="8" y="6" width="8" height="13"/></svg></button>
    <button aria-label="选择基线图元"><svg width="20" height="20"><path d="M2 12.500L11.500 3v9.500zM2 12.500h11M2 16.500h10" fill="#e4f2fc" stroke="#2478bc"/><use href="#redx" x="10" y="2" width="8" height="8"/><use href="#arrow" x="10" y="6" width="8" height="13"/></svg></button>
    <button aria-label="选择锁定图元"><svg width="20" height="20"><path d="M2.500 2.500h9v3h-9zM4.500 5.500h6v4h-6zM1.500 9.500h11v3h-11z" fill="#f8c090" stroke="#b83c10"/><path d="M7.500 13v5" stroke="#555"/><use href="#redx" x="10" y="2" width="8" height="8"/><use href="#arrow" x="10" y="6" width="8" height="13"/></svg></button>
    <button aria-label="按面选择"><svg width="20" height="20"><path d="M3.500 4.500l7-2v12l-7 2z" fill="#a8d8f8" stroke="#2478bc"/><use href="#arrow" x="10" y="6" width="8" height="13"/></svg></button>
    <button aria-label="选择时拖曳"><svg width="20" height="20"><path d="M2 7.500h10M7.500 2v11M4 5L2 7.500 4 10M5 4l2.500-2L10 4M5 11l2.500 2 2.500-2" fill="none" stroke="#111"/><use href="#redx" x="10" y="2" width="8" height="8"/><use href="#arrow" x="10" y="6" width="8" height="13"/></svg></button>
    <button class="filter"><svg width="18" height="18"><path d="M1.500 2.500h15v2l-6 6v6h-3v-6l-6-6z" fill="url(#metal)" stroke="#333"/></svg><span>:0</span></button>
  </div>
</footer>
</body>
</html>
```
FILE: styles.css
```
* { box-sizing: border-box; }
html { height: 100%; }
body {
  margin: 0;
  min-height: 100%;
  height: 100vh;
  display: flex;
  flex-direction: column;
  overflow: hidden;
  background: #000;
  color: #111;
  font: 12px/16px "Noto Sans", "Noto Sans CJK SC", sans-serif;
  border-bottom: 4px solid #000;
}
button, input, select { font: inherit; color: inherit; }
button { border: 0; padding: 0; margin: 0; background: none; }
svg { display: block; flex: none; }
h1, h2, p { margin: 0; font-weight: 400; }
.defs { position: absolute; width: 0; height: 0; }

.tri {
  display: inline-block;
  border: 3px solid transparent;
  border-top: 3px solid #333;
  border-bottom: 0;
}
.tri.pale { border-top-color: #9db4c4; }
.tri.grey { border-width: 4px; border-top-color: #999; border-bottom: 0; }
.tri.wide { border-width: 4px; border-bottom: 0; }

/* title bar and tabs */
.top { position: relative; background: #9b9b9b; flex: none; }
.app {
  position: absolute;
  left: 0;
  top: 0;
  z-index: 2;
  background: linear-gradient(#d2d2d2, #999);
  border-right: 1px solid #111;
  border-bottom: 1px solid #111;
}
.topbar { display: flex; height: 21px; padding-left: 44px; background: #c9c9c9; overflow: hidden; }
.recent {
  width: 212px;
  flex: none;
  display: flex;
  align-items: center;
  justify-content: flex-end;
  padding: 0 4px;
  background: #fbfbfb;
  border-bottom: 1px solid #8fb4c8;
}
.quick, .info { display: flex; flex: none; background: #cfcfcf; border-bottom: 1px solid #8c8c8c; }
.info { border-left: 1px solid #888; border-right: 1px solid #888; }
.q { display: flex; align-items: center; justify-content: center; flex: none; height: 18px; }
.q.more { flex-direction: column; gap: 2px; }
.bar { width: 8px; height: 1px; background: #333; }
.w8 { width: 8px; }
.w10 { width: 10px; }
.w12 { width: 12px; }
.w14 { width: 14px; }
.w20 { width: 20px; }
.w22 { width: 22px; }
.w24 { width: 24px; }
.w28 { width: 28px; }
.w42 { width: 42px; }
.w54 { width: 54px; }
.w66 { width: 66px; }
.q.on { background: #b3d6f2; border: 1px solid #1e6cc0; height: 20px; }
.sep { flex: none; background: linear-gradient(90deg, #a8a8a8, #a8a8a8) center / 1px 100% no-repeat; }
.doc-title {
  flex: 1;
  min-width: 0;
  height: 21px;
  padding-right: 1px;
  background: #8ccdf2;
  text-align: right;
  font-size: 14px;
  line-height: 14px;
  white-space: nowrap;
  border-bottom: 1px solid #7fa8bc;
}
.signin { width: 106px; justify-content: flex-start; gap: 5px; padding-left: 3px; }
.win { width: 119px; flex: none; display: flex; justify-content: flex-end; align-items: flex-start; background: #8ccdf2; }
.win button { width: 27px; display: flex; justify-content: center; height: 10px; }
.win .close { width: 38px; background: #7f9fb0; }

.tabs { display: flex; align-items: flex-end; height: 20px; padding-left: 44px; color: #222; }
.tabs button { height: 18px; padding: 0 10px; white-space: nowrap; }
.tabs .active { background: linear-gradient(#e2e2e2, #fbfbfb); }
.tabs .fold { display: flex; align-items: center; padding: 0 20px; }

/* ribbon */
.ribbon { display: flex; flex: none; height: 95px; background: #fafafa; color: #3c3c3c; border-bottom: 1px solid #d4d4d4; }
.panel { display: flex; flex-direction: column; flex: none; border-right: 1px solid #c0c2c6; padding: 0 2px 1px 1px; }
.body { flex: 1; display: flex; padding-top: 3px; min-height: 0; }
.cap { height: 18px; line-height: 16px; text-align: center; background: #eff1f3; border-top: 1px solid #d0d2d6; border-bottom: 1px solid #d0d2d6; white-space: nowrap; display: block; }
.cap .tri { border-width: 4px; border-bottom: 0; margin: 0 0 2px 2px; }
.panel button:not(.cap) { display: flex; align-items: center; justify-content: center; }
.panel .big, .big { display: flex; flex-direction: column; align-items: center; padding: 2px 0 0; line-height: 15px; white-space: nowrap; text-align: center; }
.panel button.big { justify-content: flex-start; }
.big span { margin-top: 4px; }
.selected { background: #b4d6f2; outline: 1px solid #2a70b8; outline-offset: -1px; }
.p-select { width: 50px; }
.p-select .body { padding-left: 5px; }
.p-select .big { width: 38px; height: 72px; }
.p-props { width: 83px; }
.grid2 { display: grid; grid-template-columns: 38px 40px; grid-template-rows: 35px 35px; gap: 1px; padding-left: 2px; }
.p-clip { width: 76px; }
.p-clip .body { padding-left: 7px; }
.p-clip .stack { display: grid; grid-template-rows: 24px 24px 24px; width: 18px; margin-left: 10px; }
.paste { width: 34px; }
.paste .tri { margin-top: 3px; }
.p-geo { width: 81px; }
.geo { display: grid; grid-template-columns: 20px 15px 24px 12px; grid-template-rows: 25px 25px; align-content: center; padding: 2px 0 0 4px; }
.p-modify { width: 238px; }
.mod-large { display: grid; grid-template-columns: repeat(4, 39px); grid-template-rows: 35px 35px; padding-left: 2px; }
.mod-small { display: grid; grid-template-columns: repeat(3, 25px); grid-template-rows: repeat(3, 24px); }
.p-measure { width: 56px; }
.measure { display: grid; grid-template-columns: 40px 12px; grid-template-rows: 35px 35px; }
.p-create { width: 44px; }
.create { display: grid; grid-template-rows: 35px 35px; }
.p-master { width: 203px; }
.p-master .body { padding-left: 1px; }
.p-olive { width: 361px; }
.olive { padding-left: 3px; }
.bicon text { font: 600 12px "Open Sans", sans-serif; fill: #3fb868; }
.panel-edit {
  flex: none;
  width: 60px;
  display: flex;
  flex-direction: column;
  align-items: center;
  justify-content: space-between;
  margin-top: 1px;
  padding: 1px 0 4px;
  border: 1px solid #1c68c0;
  background: linear-gradient(#d2dae8, #e6eaf6);
}
.panel-edit .tri { border-width: 4px; border-bottom: 0; }
.ribbon-rest { flex: 1; background: linear-gradient(90deg, #ececec, rgba(236, 236, 236, 0)), linear-gradient(#e6e6e6, #b2b2b2); }
.options { position: relative; flex: none; height: 25px; background: #e4e4e4; }
.pointer { position: absolute; right: 95px; top: 10px; z-index: 3; }

/* workspace */
.work { flex: 1; display: flex; min-height: 0; background: #eceef0; }
.side { width: 226px; flex: none; display: flex; flex-direction: column; padding-right: 4px; border-right: 2px solid #777; }
.side-head { display: flex; align-items: center; justify-content: space-between; height: 18px; flex: none; padding: 0 5px 0 3px; background: #c1d0e0; color: #444; }
.side-head h2 { font-size: 12px; line-height: 18px; }
.side-frame { flex: 1; min-height: 0; display: flex; margin-top: 2px; padding: 2px 3px 1px; border: 1px solid #999; border-left: 0; border-bottom: 2px solid #111; background: #f4f5f6; }
.side-in { flex: 1; display: flex; flex-direction: column; background: #fafafa; border-top: 2px solid #777; border-left: 2px solid #777; min-width: 0; }
.type { display: flex; align-items: center; justify-content: space-between; height: 72px; flex: none; padding: 0 2px; background: linear-gradient(#fbfbfb, #f4f5f7 60%, #ececee); border-bottom: 2px solid #e4e4e6; border-right: 2px solid #e4e4e6; }
.family { display: flex; gap: 6px; height: 25px; flex: none; align-items: flex-start; background: #f0f1f2; }
.family select {
  width: 127px;
  height: 22px;
  margin-top: 1px;
  padding: 0 2px;
  appearance: none;
  border: 1px solid #aaa;
  border-radius: 0;
  background: #f0f0f0 url("data:image/svg+xml,%3Csvg xmlns='http://www.w3.org/2000/svg' width='10' height='7'%3E%3Cpath d='M1 1l4 4 4-4' fill='none' stroke='%23333' stroke-width='1.8'/%3E%3C/svg%3E") right 3px center no-repeat;
}
.edit { display: flex; align-items: center; gap: 5px; height: 22px; color: #999; white-space: nowrap; }
.props { width: 100%; border-spacing: 0; table-layout: fixed; flex: none; border-right: 2px solid #f4f4f4; }
.props td, .props th { height: 18px; padding: 0; line-height: 16px; font-weight: 400; text-align: left; white-space: nowrap; overflow: hidden; }
.props td { border-bottom: 1px dotted #777; vertical-align: top; }
.props td:first-child { padding-left: 7px; border-right: 1px dotted #777; }
.props td:last-child { padding-left: 2px; border-right: 1px dotted #777; }
.props th { background: #dadada; vertical-align: top; }
.props th button { display: flex; align-items: center; justify-content: space-between; width: 100%; height: 17px; padding: 0 5px 0 1px; }
.off { color: #888; }
.props td.field { padding: 0; }
.field input { display: block; width: 104px; height: 17px; padding: 0 1px; border: 1px solid #111; border-radius: 0; background: #fff; }
.props input[type=checkbox] { appearance: none; display: block; width: 13px; height: 13px; margin: 3px 0 1px 1px; border: 1px solid #555; background: #fff; }
.props input[type=checkbox]:checked { background: #fff url("data:image/svg+xml,%3Csvg xmlns='http://www.w3.org/2000/svg' width='11' height='11'%3E%3Cpath d='M2 5l3 3 4-6' fill='none' stroke='%23000' stroke-width='2'/%3E%3C/svg%3E") center no-repeat; }
.side-foot { display: flex; justify-content: space-between; align-items: center; margin-top: auto; height: 23px; padding: 0 2px 0 1px; background: #eef0f2; }
.side-foot a { color: #0a66cc; }
.side-foot button { width: 73px; height: 19px; border: 1px solid #d4d4d4; color: #888; }
.side-tabs { display: flex; flex: none; height: 23px; padding-bottom: 1px; }
.side-tabs button { padding: 0 8px 0 5px; border-right: 2px solid #777; border-bottom: 2px solid #777; background: #f2f3f4; border-radius: 0 0 3px 3px; white-space: nowrap; }
.side-tabs .active { padding: 0 7px; background: #fafafa; }

.view { flex: 1; min-width: 0; display: flex; flex-direction: column; border-top: 2px solid #777; }
.view-row { flex: 1; display: flex; min-height: 0; }
.canvas { position: relative; flex: 1; min-width: 0; background: #000; overflow: hidden; }
.drawing { width: 100%; height: 100%; }
.mdi { position: absolute; right: 4px; top: 8px; display: flex; gap: 6px; }
.navbar { position: absolute; right: 2px; top: 30px; width: 32px; height: 114px; display: flex; flex-direction: column; align-items: center; background: #4b4b4b; border: 1px solid #626262; border-radius: 4px; }
.navbar hr { width: 26px; margin: 12px 0 2px; border: 0; border-top: 1px solid #333; }
.navbar .tiny { align-self: flex-end; }
.navbar .tiny:first-child { margin-bottom: 8px; }
.navbar .tiny:last-child { margin-top: auto; }
.navbar text { font: bold 9px "Liberation Sans", sans-serif; fill: #3a66b0; }
.vscroll { width: 15px; flex: none; display: flex; flex-direction: column; align-items: center; justify-content: space-between; padding: 6px 0 5px; background: #f0f1f2; }
.vscroll .thumb { width: 14px; height: 17px; background: #cdcdcd; }
.controls { display: flex; align-items: center; flex: none; height: 18px; padding: 0 1px 0 24px; background: #f0f2f3; }
.scale { width: 53px; text-align: left; font: 11px/14px "Liberation Mono", monospace; white-space: pre; }
.vc { width: 21px; flex: none; display: flex; justify-content: center; }
.hscroll { flex: 1; height: 18px; display: flex; align-items: center; justify-content: space-between; padding: 0 7px 0 5px; }
.hscroll .thumb { width: 17px; height: 15px; background: #cdcdcd; }

.status { display: flex; align-items: center; justify-content: space-between; flex: none; height: 25px; padding: 1px 79px 0 1px; border-top: 1px solid #888; background: linear-gradient(#f0f0f0, #cfd0d2); }
.status p { white-space: nowrap; }
.sel { display: flex; gap: 2px; }
.sel button { width: 24px; height: 22px; display: flex; align-items: center; justify-content: center; background: #dedfe1; }
.sel .filter { width: 30px; background: none; }
```
